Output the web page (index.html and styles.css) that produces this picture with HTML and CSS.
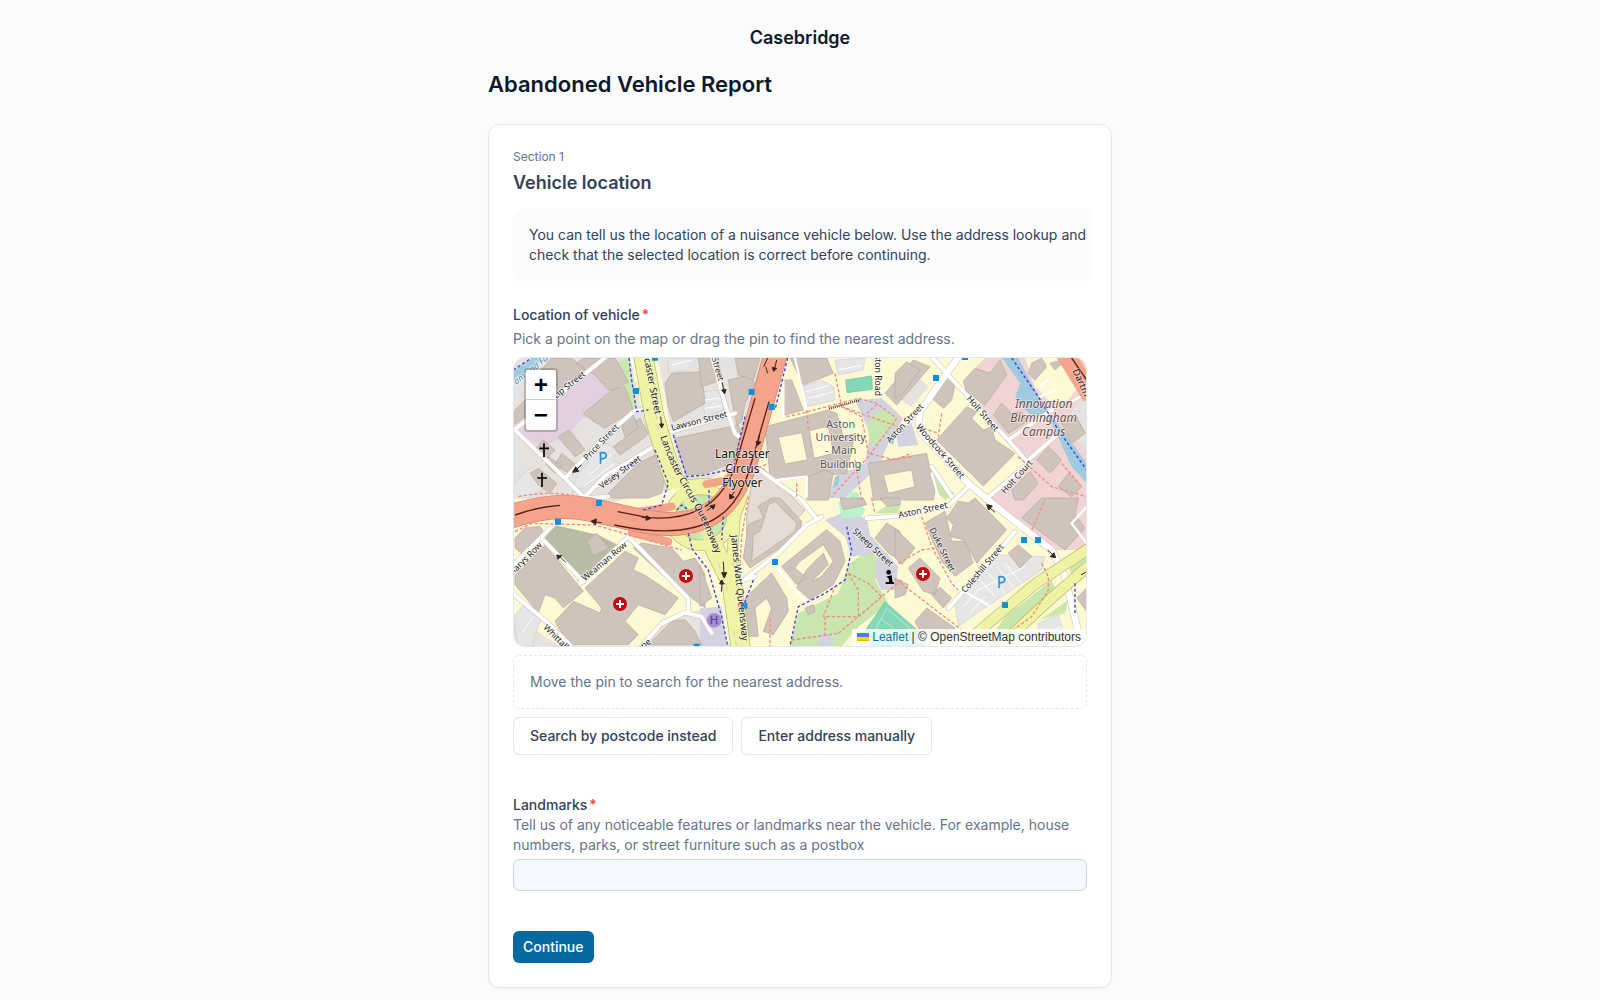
FILE: index.html
```html
<!DOCTYPE html>
<html lang="en">
<head>
    <meta charset="UTF-8">
    <meta name="viewport" content="width=device-width, initial-scale=1">
    <title>Abandoned Vehicle Report</title>
    <link rel="stylesheet" href="styles.css">
</head>
<body>
<div class="page">
    <header class="brand">Casebridge</header>
    <h1 class="title">Abandoned Vehicle Report</h1>
    <form class="card">
        <p class="section-no">Section 1</p>
        <h2 class="section-title">Vehicle location</h2>
        <p class="info">You can tell us the location of a nuisance vehicle below. Use the address lookup and check that the selected location is correct before continuing.</p>

        <div class="field field-map" role="group" aria-labelledby="locationLabel">
            <p class="label" id="locationLabel">Location of vehicle<span class="required">*</span></p>
            <p class="hint">Pick a point on the map or drag the pin to find the nearest address.</p>
            <div class="map">
                <svg class="map-canvas" viewBox="27 24 1716 864" preserveAspectRatio="xMidYMid slice" aria-hidden="true">
                    <rect class="ground" x="0" y="0" width="1800" height="900"/>
                    <!-- land use -->
                    <path class="city" d="M0 0H370L410 180 495 420 300 460 0 440zM455 0H790L700 330 600 400 540 400 500 250zM0 780L180 900H0zM410 888L480 810 585 780 680 888z"/>
                    <path class="industrial" d="M140 170L200 100 265 62 310 120 300 160 225 212 200 240 235 290 215 320 160 270 110 290 25 235 90 180z"/>
                    <path class="commercial" d="M1375 90L1440 24H1745V600L1640 600 1440 460 1570 340 1500 270z"/>
                    <path class="ground" d="M1560 24H1680L1720 110 1690 150 1640 160 1590 110z"/>
                    <path class="city" d="M1700 180L1745 130V300L1690 250z M1170 140L1230 70 1270 110 1220 170z"/>
                    <path class="grass" d="M330 40L370 24 395 160 375 190 345 110 370 95z"/>
                    <path class="grass" d="M1105 600L1120 640 1110 690 1150 760 1060 830 1010 888H855L880 790 1000 730 1035 640 1070 615z"/>
                    <path class="grass" d="M1260 340L1290 350 1330 420 1350 430 1320 450 1270 400zM1140 470L1190 455 1180 490 1110 490zM650 610L700 600 700 650z"/>
                    <ellipse class="grass" cx="588" cy="502" rx="98" ry="90"/>
                    <path class="grass" d="M1500 800L1640 690 1660 740 1480 880 1440 888zM1690 640L1745 600V670L1700 680zM1590 820L1690 750 1680 790 1600 810z"/>
                    <path class="brown" d="M150 525L280 555 350 590 240 695 115 570z"/>
                    <path class="plaza" d="M1050 150L1130 145 1195 205 1150 280 1120 350 1020 444H970L990 380 1080 340 1095 250zM1170 240L1220 220 1240 285 1180 290zM960 510L1010 490 1085 505 1095 555 1180 650 1170 720 1130 720 1110 680 1115 610 1040 620 1020 560zM585 775L650 770 665 888H585zM940 860Q960 830 990 870L970 888H940z"/>
                    <path class="grass" d="M1090 215Q1125 155 1182 205L1135 260 1100 290Q1085 250 1090 215z"/>
                    <path class="pitch" d="M1022 90L1100 78 1102 118 1026 128zM1140 756L1260 860V888H1100L1075 850z"/>
                    <path class="mint" d="M1000 455L1050 440 1080 480 1070 500 1010 505zM1025 430L1055 425 1070 450 1045 455z"/>
                    <path class="mintline" d="M1145 775L1215 835 1170 875 1110 840zM1128 805L1190 855"/>
                    <path class="water" d="M0 80L120 0H150L0 112zM1485 15H1535L1600 140 1745 340V400L1700 350 1640 220 1570 190 1530 145 1545 100z M990 380L1005 375 1000 405 985 415z M1155 265L1170 255 1165 285 1155 280z"/>

                    <!-- car parks -->
                    <path class="parking" d="M490 24H580L545 60 490 70zM245 340L290 275 340 300 325 330 350 345 200 430 215 380zM890 110L950 90 985 110 990 150 905 170zM990 30L1080 24 1075 60 1000 75zM590 125L645 120 655 180 600 200zM1480 615L1620 620 1610 660 1400 800 1360 830 1350 760zM25 800L60 760 110 800 80 888H40zM1600 820L1660 795 1680 860 1600 888zM25 400L80 350 130 410 70 444H25z"/>
                    <path class="bays" d="M500 45L560 30M905 125L975 105M910 145L985 125M1000 60L1070 45M595 150L648 145M598 175L652 168M1425 690L1470 740M1450 670L1500 730M1475 650L1525 710M1500 640L1550 700M1375 770L1420 720 1560 650M1395 790L1440 740M250 380L320 310M235 410L330 340M50 850L85 800M1620 850L1670 830"/>

                    <!-- buildings -->
                    <g class="buildings">
                        <path d="M95 75L140 24H200L240 60 190 95 165 130 130 60z"/>
                        <path d="M235 24H330L370 95 315 125 270 75 215 40z"/>
                        <path d="M235 190L285 150 320 120 360 110 385 180 300 235 260 210z"/>
                        <path d="M325 290L385 245 375 225 405 205 430 250 415 265 345 315z"/>
                        <path d="M345 215L385 195 400 235 360 260z"/>
                        <path d="M88 300L115 270 150 300 120 330z"/>
                        <path d="M130 320L170 345 150 370 125 345zM170 310L220 350 200 375 150 345zM30 180L60 150 60 200 25 225z"/>
                        <path d="M75 370L100 355 155 400 135 430 100 405z"/>
                        <path d="M160 260L190 240 240 300 210 320z"/>
                        <path d="M310 430L400 340 450 315 480 380 470 430 430 444H320z"/>
                        <path d="M480 100L500 70 590 65 600 160 505 215 490 170z"/>
                        <path d="M508 265L700 225 715 270 680 340 600 370 545 375z"/>
                        <path d="M580 24H640L650 90 590 110zM670 90L730 75 750 100 720 160 710 215 695 225 680 150z"/>
                        <path d="M690 24H765L745 90 700 75z"/>
                    </g>
                    <g class="buildings" transform="translate(585 0)">
                        <path d="M245 90L275 90 310 180 255 195z"/>
                        <path fill-rule="evenodd" d="M195 230L385 180 410 190 430 260 465 250 440 370 245 390 210 380zM235 262L305 248 322 330 255 342zM328 242L385 228 400 310 342 325z"/>
                        <path d="M325 380L375 360 400 370 385 450H320z"/>
                        <path d="M270 24H380L400 70 310 105z"/>
                        <path d="M555 130L640 30 690 50 630 120 590 165z"/>
                        <path fill-rule="evenodd" d="M505 340L680 310 705 420 700 450H520zM550 375L635 360 645 410 565 430z"/>
                        <path class="pale" d="M160 360L190 355 315 480 270 530 140 640 140 500z"/>
                    </g>
                    <g class="buildings" transform="translate(1170 0)">
                        <path d="M0 70L35 35 75 60 25 130 0 145z"/>
                        <path d="M105 140L145 80 180 105 170 150 145 175z"/>
                        <path d="M205 95L240 55 285 70 315 30 335 75 270 165 215 125z"/>
                        <path d="M125 270L215 170 245 185 230 205 265 240 290 230 300 270 360 310 265 408z"/>
                        <path d="M295 195L320 160 350 190 380 185 395 215 340 250z"/>
                        <path d="M410 40L440 24 455 50 420 90 400 70zM500 220L545 200 570 250 530 280z"/>
                        <path d="M425 330L460 290 500 330 465 370z"/>
                        <path d="M350 420L405 365 430 400 385 450H360z"/>
                        <path d="M490 410L520 370 560 410 530 440zM520 24L480 60 465 40z"/>
                    </g>
                    <g class="buildings" transform="translate(0 444)">
                        <path d="M30 120L60 90 105 85 120 110 60 175 30 150z"/>
                        <path d="M30 230L120 140 235 280 175 330 150 300 120 290 100 345 30 260z"/>
                        <path d="M245 130L275 105 310 150 265 175z"/>
                        <path d="M240 270L360 160 400 180 385 215 425 235 520 300 480 350 400 320 360 370 400 410 370 440H190L150 370 205 310 285 345 290 330z"/>
                        <path d="M385 150L410 135 500 150 535 190 570 180 600 230V330L560 300 460 220z"/>
                        <path d="M430 440L500 370 540 365 570 400 590 440z"/>
                    </g>
                    <g class="buildings" transform="translate(585 444)">
                        <path d="M145 80L190 60 175 24 215 0H240L305 70 300 110 150 210 130 180z"/>
                        <path class="pale" d="M205 20L225 10 290 75 285 100 155 190 160 110 180 100z"/>
                        <path d="M245 205L380 95 420 130 435 190 400 260 330 305 290 270 320 215 370 165 385 200 335 250 365 235 400 190 370 140 300 190 285 210 320 240 290 260z"/>
                        <path d="M135 300L215 225 260 300 265 340 220 410 190 400 215 330 200 300 165 330 175 415H145z"/>
                        <path d="M525 120L560 75 600 100V180L570 170zM0 200L35 300 0 325zM315 330L340 320 345 340 325 350z"/>
                        <path d="M420 0H490L500 20 430 35z M540 0H600V20L560 25z"/>
                    </g>
                    <g class="buildings" transform="translate(1170 444)">
                        <path d="M0 90L60 150 20 200 0 180z"/>
                        <path d="M90 75L150 40 170 130 210 130 235 195 180 235 140 190z"/>
                        <path d="M155 60L190 10 220 15 240 0 335 95 245 195 205 125 165 115 175 80z"/>
                        <path d="M340 165L370 140 410 175 375 210z"/>
                        <path d="M380 60L440 0H550L540 50 570 90 510 155z"/>
                        <path d="M40 210L75 180 135 240 120 290 85 280zM110 290L135 268 170 300 145 330z"/>
                        <path d="M0 240L40 260 30 290 0 300zM60 370L95 330 180 390 160 410H80z"/>
                        <path d="M545 300L575 270V340z"/>
                    </g>

                    <!-- minor roads: casing, then fill -->
                    <g class="casing">
                        <path d="M15 250L130 160 310 15M25 235L180 385 240 445 310 440M425 175L385 185 300 260 180 385M450 288L300 378 240 440"/>
                        <path d="M500 245L690 190M620 15L665 180 690 250 715 270"/>
                        <path d="M1365 15L1325 70 1245 185 1240 220 1250 250 1390 400 1480 475 1640 600 1680 680 1730 888" class="wide"/>
                        <path d="M1270 10L1325 70 1510 270 1570 340M1570 340L1440 450M1510 270L1640 180M1570 330L1650 260"/>
                        <path d="M1085 505L1180 498 1330 468 1390 410M1340 440L1280 350"/>
                        <path d="M715 690L820 610 905 525 950 500M765 360L890 450 930 500M715 690L750 680"/>
                        <path d="M1530 545L1440 650 1330 775"/>
                        <path d="M10 720L130 820 210 900M225 700L370 560M115 570L235 695M0 670L155 515M370 560L550 745V790"/>
                        <path d="M400 900L470 820 540 788 590 800 620 850"/>
                    </g>
                    <g class="minor">
                        <path d="M15 250L130 160 310 15M25 235L180 385 240 445 310 440M425 175L385 185 300 260 180 385M450 288L300 378 240 440"/>
                        <path d="M500 245L690 190M620 15L665 180 690 250 715 270"/>
                        <path d="M1365 15L1325 70 1245 185 1240 220 1250 250 1390 400 1480 475 1640 600 1680 680 1730 888" class="wide"/>
                        <path d="M1270 10L1325 70 1510 270 1570 340M1570 340L1440 450M1510 270L1640 180M1570 330L1650 260"/>
                        <path d="M1085 505L1180 498 1330 468 1390 410M1340 440L1280 350"/>
                        <path d="M715 690L820 610 905 525 950 500M765 360L890 450 930 500M715 690L750 680"/>
                        <path d="M1530 545L1440 650 1330 775"/>
                        <path d="M10 720L130 820 210 900M225 700L370 560M115 570L235 695M0 670L155 515M370 560L550 745V790"/>
                        <path d="M400 900L470 820 540 788 590 800 620 850"/>
                        <path d="M1745 470L1700 520 1745 580M1745 130L1690 160" class="thin"/>
                        <path d="M810 645L905 760M835 24V200M870 24L905 180M815 390L905 380 905 440" class="thin"/>
                        <path d="M1280 370L1300 440M1600 110L1630 90M1605 140L1650 120M1320 680L1370 720 1450 765" class="thin"/>
                    </g>

                    <!-- secondary roads -->
                    <g class="secondary">
                        <path class="edge w60" d="M412 0L448 200 480 310 515 410"/>
                        <ellipse class="edge w36" cx="588" cy="502" rx="92" ry="84"/>
                        <path class="edge w60" d="M625 590L680 700 708 900"/>
                        <path class="edge w36" d="M715 430L690 500 680 640M620 400L545 405 510 380M1760 590L1590 702 1390 870M1760 640L1650 735 1470 900"/>
                        <path class="w60" d="M412 0L448 200 480 310 515 410"/>
                        <ellipse class="w36" cx="588" cy="502" rx="92" ry="84"/>
                        <path class="w60" d="M625 590L680 700 708 900"/>
                        <path class="w36" d="M715 430L690 500 680 640M620 400L545 405 510 380M1760 590L1590 702 1390 870M1760 640L1650 735 1470 900"/>
                        <path class="under" d="M515 400L570 480 625 590"/>
                        <path class="lane" d="M445 120L460 240M640 640L675 740M685 840L695 888"/>
                    </g>

                    <!-- trunk road -->
                    <g class="trunk">
                        <path class="slip" d="M605 402L660 392 710 350M380 548L490 575M400 485L500 470"/>
                        <path class="edge" d="M815 0L735 290Q705 420 640 475 560 540 420 515L250 478Q140 455 0 505"/>
                        <path d="M815 0L735 290Q705 420 640 475 560 540 420 515L250 478Q140 455 0 505"/>
                        <path d="M1680 10L1760 140" class="dart"/>
                    </g>
                    <path class="centre" d="M750 145L690 350Q660 430 600 470M792 155L730 370Q700 460 640 500 540 570 328 525M338 485L430 503Q520 510 585 478M30 495Q100 470 165 466M1700 24L1745 90"/>

                    <!-- foot and cycle paths -->
                    <path class="foot" d="M845 200L890 190 1060 145 1115 160 1175 205 1090 320 980 440M990 70L1010 170 1070 200 1090 310 1170 330 1220 310M1050 330L1070 450M875 400V440M905 180L910 240M1085 190L1120 160M1250 500L1280 590 1340 700 1360 720M1175 690L1370 840M1180 640L1250 600 1290 595M1030 670L1060 720 1060 800 955 800 990 710M1060 800L1130 740 1190 690M1030 670L1090 700 1130 740M960 800V860M860 870L1000 850M1000 850L1130 740M795 805V888M1100 444L1110 490M1610 640L1630 680V720L1580 800 1510 850M1540 320L1640 410 1745 440M1670 340L1730 410M1580 540L1620 450M1240 230L1300 250M1310 190L1300 260M30 545L80 520 270 525 530 600M40 440Q140 420 220 440M730 440L710 560 705 640M745 360L790 340M1220 320L1150 330M1010 170L1180 230"/>
                    <path class="cycle" d="M372 24L380 90 395 185 430 180M505 255L545 380 600 375 690 355M450 300L490 400 470 465 410 482M848 24L810 180M720 200L690 330M1520 24L1600 140 1660 240 1745 360M1025 530L1040 600 1020 690 960 730 880 770 855 888M560 595L610 660 650 800 668 888M612 420V470M655 500L650 570M515 480L530 465 550 480M550 550L560 590M745 690L710 780M25 60L80 24M1710 700V790"/>
                    <path class="steps" d="M972 176L1065 150"/>

                    <!-- one way arrows -->
                    <g class="arrows">
                        <path d="M467 200L470 228M464 222L470 234 476 222zM230 345L208 363M212 350L203 367 221 364zM652 98L657 126M650 120L659 132 663 118zM788 70L782 50M776 50L788 24M815 30L808 60M802 52L806 64 815 55zM763 255L760 280M753 274L758 287 768 276zM688 425L678 440M674 432L674 447 688 442zM290 518L262 515M274 507L258 514 272 524zM410 502L432 504M424 497L438 505 423 511zM605 482L625 468M615 468L630 464 625 478zM655 635L657 676M650 668L658 684 665 668zM649 725L652 690M644 702L649 690 658 702zM165 620L182 637M155 615L170 617 159 628zM1450 470L1470 487M1445 464L1462 468 1451 480zM1628 600L1650 620M1652 623L1636 620 1647 608zM1745 665L1728 675"/>
                    </g>

                    <!-- points of interest -->
                    <path class="stops" d="M441 14h18v18h-18zM384 114h18v18h-18zM731 117h18v18h-18zM791 162h18v18h-18zM1284 75h18v18h-18zM1371 12h18v18h-18zM273 450h18v18h-18zM150 506h18v18h-18zM801 627h18v18h-18zM709 758h18v18h-18zM1548 561h18v18h-18zM1590 561h18v18h-18zM1491 756h18v18h-18zM566 881h18v18h-18z"/>
                    <g class="medical">
                        <circle cx="543" cy="678" r="21"/>
                        <circle cx="345" cy="762" r="21"/>
                        <circle cx="1254" cy="672" r="21"/>
                        <path d="M531 678h24M543 666v24M333 762h24M345 750v24M1242 672h24M1254 660v24"/>
                    </g>
                    <path class="cross" d="M117 280v42M103 295h29M111 368v43M97 384h29"/>
                    <circle class="helipad" cx="627" cy="811" r="22"/>
                    <g class="info-pin">
                        <circle cx="1151" cy="667" r="7"/>
                        <path d="M1143 680L1160 676 1162 694 1168 702V702H1148L1153 692 1150 684zM1142 696h24v6h-24z"/>
                    </g>

                    <!-- labels -->
                    <g class="street">
                        <text class="canal" transform="translate(34 104) rotate(-38)">am and Fa</text>
                        <text class="end" transform="translate(243 76) rotate(-38)">Princip Street</text>
                        <text transform="translate(246 333) rotate(-46)">Price Street</text>
                        <text transform="translate(290 417) rotate(-36)">Vesey Street</text>
                        <text class="end main" transform="translate(450 194) rotate(79)">Lancaster Street</text>
                        <text transform="translate(501 242) rotate(-14)">Lawson Street</text>
                        <text class="end" transform="translate(640 94) rotate(74)">Street</text>
                        <text class="end" transform="translate(1110 138) rotate(90)">Aston Road</text>
                        <text transform="translate(1155 280) rotate(-47)">Aston Street</text>
                        <text transform="translate(1384 147) rotate(49)">Holt Street</text>
                        <text transform="translate(1232 232) rotate(49)">Woodcock Street</text>
                        <text transform="translate(1500 433) rotate(-48)">Holt Court</text>
                        <text transform="translate(1182 504) rotate(-12)">Aston Street</text>
                        <text transform="translate(1273 538) rotate(64)">Duke Street</text>
                        <text transform="translate(1381 730) rotate(-50)">Coleshill Street</text>
                        <text transform="translate(1041 546) rotate(43)">Sheep Street</text>
                        <text class="main" transform="translate(1702 62) rotate(66)">Dartm</text>
                        <text class="end" transform="translate(113 587) rotate(-45)">Marys Row</text>
                        <text transform="translate(240 694) rotate(-40)">Weaman Row</text>
                        <text transform="translate(114 834) rotate(45)">Whittall</text>
                        <text class="end" transform="translate(440 878) rotate(-38)">Lane</text>
                        <text class="main" transform="translate(678 556) rotate(84)">James Watt Queensway</text>
                        <path id="circus" class="guide" d="M466 260Q495 345 525 395T590 510L665 690"/>
                        <text class="main"><textPath href="#circus">Lancaster Circus Queensway</textPath></text>
                    </g>
                    <g class="place">
                        <text x="712" y="325">Lancaster</text>
                        <text x="712" y="368">Circus</text>
                        <text x="712" y="411">Flyover</text>
                    </g>
                    <g class="place building-name">
                        <text x="1007" y="233">Aston</text>
                        <text x="1007" y="273">University</text>
                        <text x="1007" y="313">- Main</text>
                        <text x="1007" y="353">Building</text>
                    </g>
                    <g class="place campus">
                        <text x="1616" y="173">Innovation</text>
                        <text x="1616" y="216">Birmingham</text>
                        <text x="1616" y="259">Campus</text>
                    </g>
                    <g class="place symbol">
                        <text x="294" y="343">P</text>
                        <text x="1489" y="713">P</text>
                        <text class="h" x="627" y="823">H</text>
                    </g>
                </svg>
                <div class="zoom">
                    <button type="button" class="zoom-btn" aria-label="Zoom in">+</button>
                    <button type="button" class="zoom-btn" aria-label="Zoom out">−</button>
                </div>
                <div class="attribution">
                    <a href="#"><svg class="flag" viewBox="0 0 12 8" aria-hidden="true"><path fill="#4c7be1" d="M0 0h12v4H0z"/><path fill="#ffd500" d="M0 4h12v3H0z"/><path fill="#e0bc00" d="M0 7h12v1H0z"/></svg> Leaflet</a> | © OpenStreetMap contributors
                </div>
            </div>
            <p class="result">Move the pin to search for the nearest address.</p>
            <div class="actions">
                <button type="button" class="btn">Search by postcode instead</button>
                <button type="button" class="btn">Enter address manually</button>
            </div>
        </div>

        <div class="field">
            <label class="label" for="landmarks">Landmarks<span class="required">*</span></label>
            <p class="hint" id="landmarksHint">Tell us of any noticeable features or landmarks near the vehicle. For example, house numbers, parks, or street furniture such as a postbox</p>
            <input class="input" type="text" id="landmarks" aria-describedby="landmarksHint">
        </div>

        <button type="submit" class="btn-primary">Continue</button>
    </form>
</div>
</body>
</html>
```
FILE: styles.css
```css
*{
    box-sizing: border-box;
    margin: 0;
    padding: 0;
}
body{
    background: #fafbfd;
    color: #0f172a;
    font-family: Inter, "Liberation Sans", sans-serif;
    font-size: 14px;
    line-height: 20px;
}
button, input{
    font: inherit;
}
.page{
    max-width: 656px;
    margin: 0 auto;
    padding: 24px 16px 12px;
}
.brand{
    font-size: 18px;
    font-weight: 600;
    line-height: 28px;
    text-align: center;
}
.title{
    margin: 16px 0 24px;
    font-size: 22px;
    font-weight: 600;
    line-height: 32px;
}
.card{
    padding: 24px;
    background: #fff;
    border: 1px solid #e2e8f0;
    border-radius: 12px;
    box-shadow: 0 1px 2px rgba(0,0,0,.05);
}
.section-no{
    font-size: 12px;
    line-height: 16px;
    color: #64748b;
}
.section-title{
    margin-top: 4px;
    font-size: 18px;
    font-weight: 600;
    line-height: 28px;
    color: #334155;
}
.info{
    margin: 12px -4px 24px 0;
    padding: 16px 4px 16px 16px;
    border-radius: 6px;
    background: #fbfcfe;
    color: #334155;
}
.field{
    margin-bottom: 40px;
}
.label{
    display: block;
    font-weight: 500;
    color: #334155;
}
.required{
    margin-left: 2px;
    color: #ef4444;
}
.hint{
    color: #64748b;
}
.field-map .hint{
    margin: 4px 0 8px;
}

/* map */
.map{
    position: relative;
    height: 290px;
    overflow: hidden;
    border: 1px solid #e2e8f0;
    border-radius: 12px;
}
.map-canvas{
    display: block;
    width: 100%;
    height: 100%;
}
.map-canvas path{
    stroke-linejoin: round;
}
.ground{ fill: #fdf9d3; }
.city{ fill: #e6e2df; }
.industrial{ fill: #e2d0e0; }
.commercial{ fill: #f0d3d3; }
.grass{ fill: #c9e6ad; }
.brown{ fill: #b9bba5; }
.plaza{ fill: #d3d2e0; }
.pitch{ fill: #84d8b8; stroke: #5fbf9b; stroke-width: 2; }
.mint{ fill: #b9f3cc; }
.mintline{ fill: none; stroke: #d0f5e6; stroke-width: 2; }
.water{ fill: #9fcbde; }
.parking{ fill: #e6e6e6; stroke: #cfcfcf; stroke-width: 2; }
.bays{ fill: none; stroke: #fff; stroke-width: 3; }
.buildings{ fill: #cfc4bc; stroke: #b5a69a; stroke-width: 2; }
.buildings .pale{ fill: #e3dbd4; }
.casing path, .minor path{
    fill: none;
    stroke-linecap: round;
}
.casing path{ stroke: #c8c3be; stroke-width: 15; }
.casing .wide{ stroke-width: 22; }
.minor path{ stroke: #fff; stroke-width: 12; }
.minor .wide{ stroke-width: 19; }
.minor .thin{ stroke-width: 7; }
.secondary path, .secondary ellipse{
    fill: none;
    stroke: #f0f3a4;
}
.secondary .w60{ stroke-width: 56; }
.secondary .w36{ stroke-width: 30; }
.secondary .edge{ stroke: #b5b86a; }
.secondary .edge.w60{ stroke-width: 60; }
.secondary .edge.w36{ stroke-width: 34; }
.secondary .under{
    stroke-width: 30;
    stroke-opacity: .8;
}
.secondary .lane{
    stroke: #dcdcc8;
    stroke-width: 5;
    stroke-dasharray: 20 14;
}
.trunk path{
    fill: none;
    stroke: #f5a48c;
    stroke-width: 68;
}
.trunk .edge{ stroke: #d97f68; stroke-width: 72; }
.trunk .slip{ stroke-width: 24; stroke-linecap: round; }
.trunk .dart{ stroke-width: 56; }
.centre{ fill: none; stroke: #5c1f14; stroke-width: 4; }
.foot{
    fill: none;
    stroke: #f28a7d;
    stroke-width: 4;
    stroke-dasharray: 10 6;
}
.cycle{
    fill: none;
    stroke: #3c3ce0;
    stroke-width: 4;
    stroke-dasharray: 9 7;
}
.steps{
    stroke: #4a3a35;
    stroke-width: 7;
    stroke-dasharray: 3 3;
}
.arrows{ fill: #3a2420; stroke: #3a2420; stroke-width: 3; }
.stops{ fill: #0d8fdc; }
.medical circle{ fill: #c4060f; }
.medical path{ stroke: #fff; stroke-width: 6; }
.cross{ fill: none; stroke: #000; stroke-width: 5; }
.helipad{ fill: #a78bd0; }
.info-pin{ fill: #000; }
.street text{
    fill: #222;
    stroke: #fff;
    stroke-width: 5;
    stroke-opacity: .7;
    paint-order: stroke;
    font-family: "Noto Sans", sans-serif;
    font-size: 26px;
}
.street .main{ font-size: 29px; stroke-opacity: .4; }
.street .end{ text-anchor: end; }
.street .canal{ fill: #4a80b0; font-style: italic; }
.guide{ fill: none; }
.place text{
    fill: #111;
    stroke: #fff;
    stroke-width: 5;
    stroke-opacity: .6;
    paint-order: stroke;
    font-family: "Noto Sans", sans-serif;
    font-size: 36px;
    text-anchor: middle;
}
.building-name text{ fill: #555; font-size: 32px; }
.campus text{ fill: #734a4a; font-style: italic; font-size: 36px; }
.symbol text{
    fill: #1d8fdd;
    stroke: #1d8fdd;
    stroke-width: 1;
    font-size: 46px;
}
.symbol .h{
    fill: #5c3d94;
    stroke: #5c3d94;
    font-size: 34px;
}

/* controls that lie over the map */
.zoom{
    position: absolute;
    top: 10px;
    left: 10px;
    display: flex;
    flex-direction: column;
    border: 2px solid rgba(0,0,0,.2);
    border-radius: 4px;
    background-clip: padding-box;
}
.zoom-btn{
    width: 30px;
    height: 30px;
    padding-top: 4px;
    border: 0;
    border-radius: 0 0 2px 2px;
    background: #fff;
    color: #000;
    font: bold 24px/26px "Liberation Mono", monospace;
    cursor: pointer;
}
.zoom-btn:first-child{
    border-bottom: 1px solid #ccc;
    border-radius: 2px 2px 0 0;
}
.attribution{
    position: absolute;
    right: 0;
    bottom: 0;
    padding: 0 5px;
    background: rgba(255,255,255,.8);
    color: #333;
    font-family: "Liberation Sans", Arial, sans-serif;
    font-size: 12px;
    line-height: 17px;
}
.attribution a{
    color: #0078a8;
    text-decoration: none;
}
.flag{
    width: 12px;
    height: 8px;
}

.result{
    margin: 8px 0;
    padding: 16px;
    border: 1px dashed #e2e8f0;
    border-radius: 6px;
    color: #64748b;
}
.actions{
    display: flex;
    flex-wrap: wrap;
    gap: 8px;
}
.btn{
    padding: 8px 16px;
    border: 1px solid #e2e8f0;
    border-radius: 6px;
    background: #fff;
    color: #334155;
    font-weight: 500;
    cursor: pointer;
}
.input{
    display: block;
    width: 100%;
    height: 32px;
    margin-top: 4px;
    padding: 0 12px;
    border: 1px solid #cbd5e1;
    border-radius: 6px;
    background: #f3f8fe;
}
.btn-primary{
    display: block;
    padding: 6px 10px;
    border: 0;
    border-radius: 6px;
    background: #0369a1;
    color: #fff;
    font-weight: 500;
    cursor: pointer;
}
```
